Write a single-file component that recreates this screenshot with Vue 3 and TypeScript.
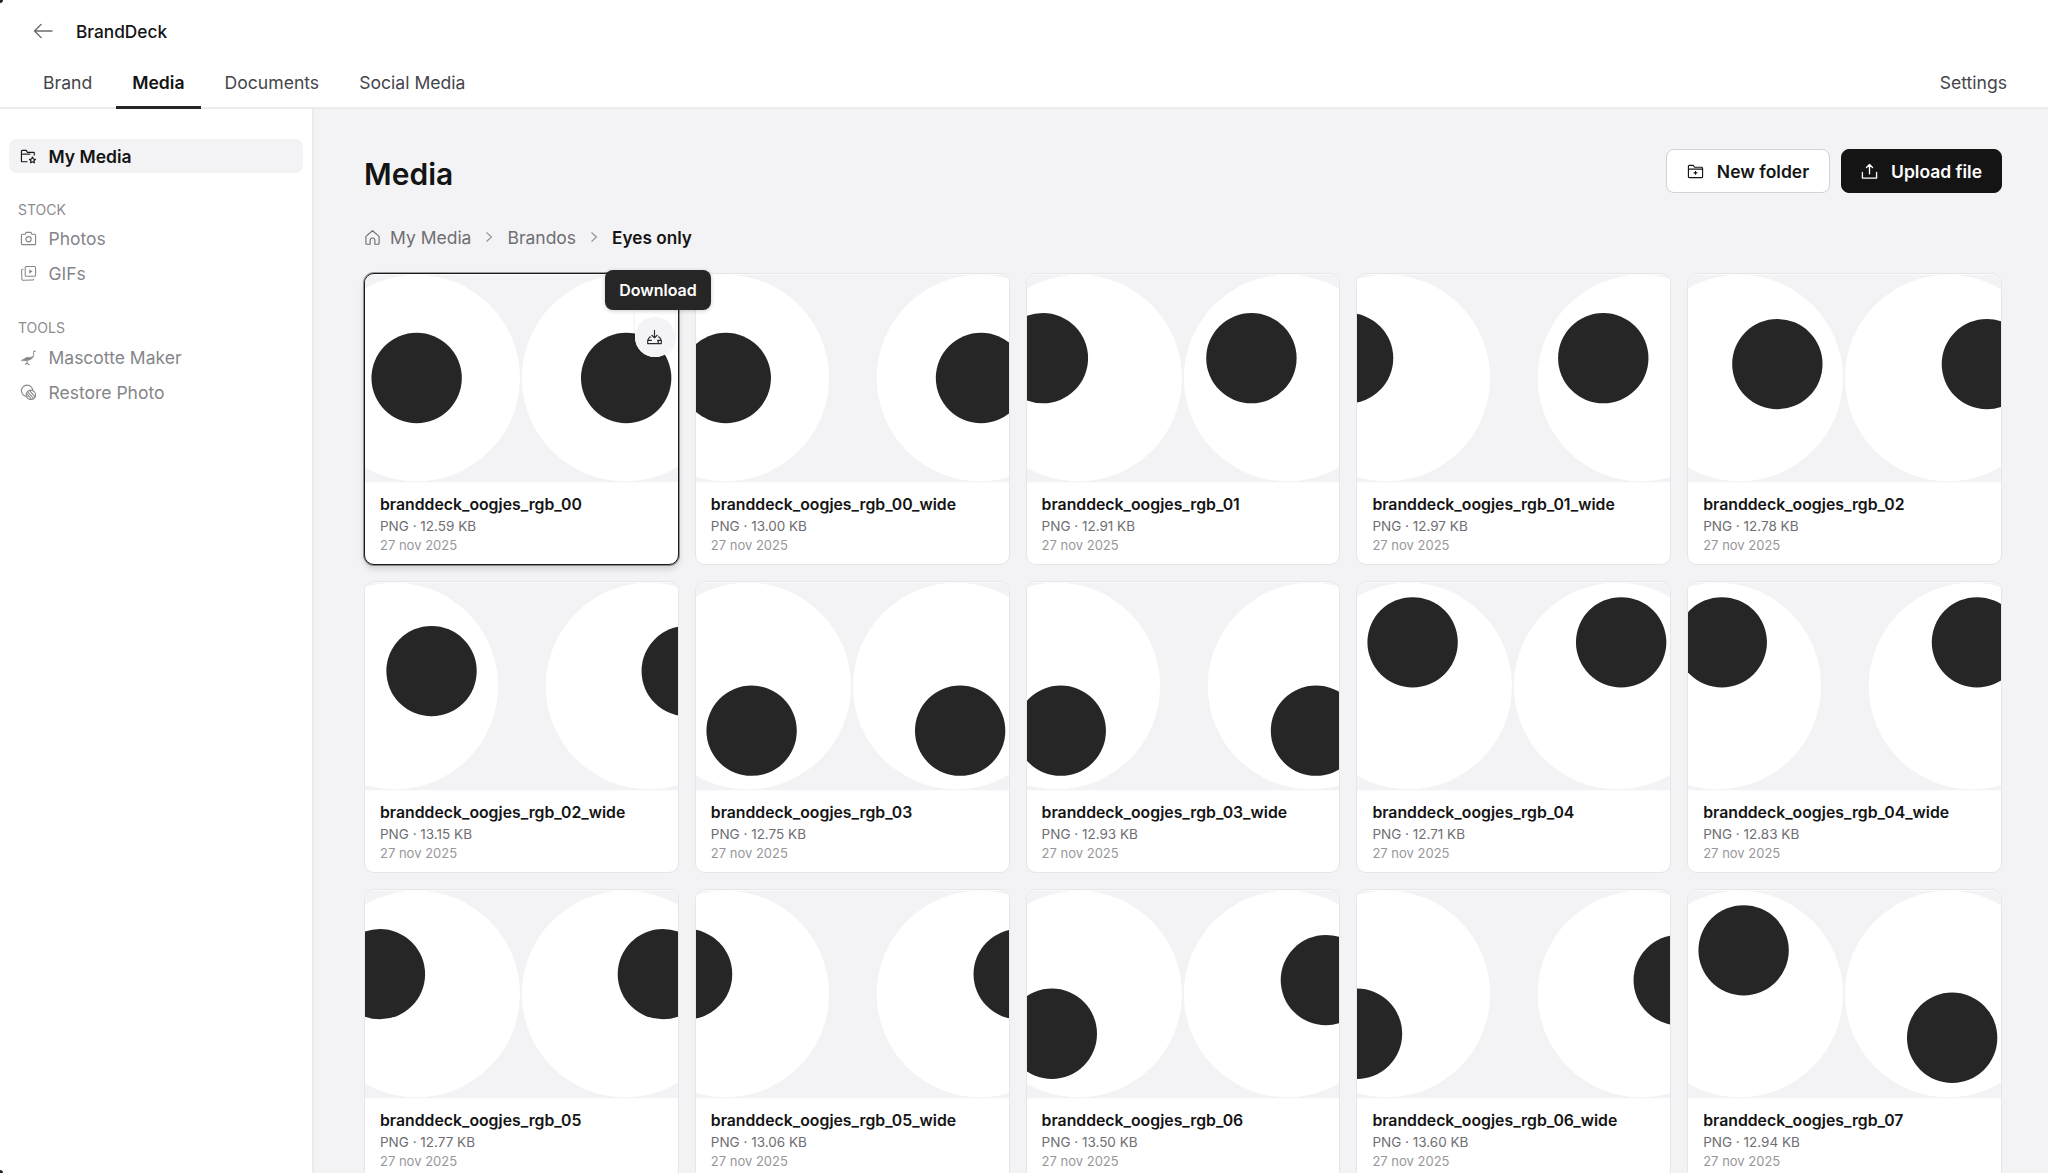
<template>
	<div class="app">
		<span class="corner corner-top"></span>
		<span class="corner corner-bottom"></span>
		<header class="topbar">
			<div class="brand-row">
				<svg class="back" viewBox="0 0 20 16" fill="none" stroke="#6b6b70" stroke-width="1.4" stroke-linecap="round" stroke-linejoin="round">
					<path d="M19 8H1.5M8 1.5 1.5 8 8 14.5" />
				</svg>
				<span class="brand-name">BrandDeck</span>
			</div>
			<nav class="tabs">
				<a v-for="t in tabs" :key="t" class="tab" :class="{ active: t === 'Media' }">{{ t }}</a>
				<a class="tab settings">Settings</a>
			</nav>
		</header>

		<div class="body">
			<aside class="sidebar">
				<div class="side-item current">
					<svg class="side-icon" viewBox="0 0 18 18" fill="none" stroke="currentColor" stroke-width="1.2" stroke-linejoin="round">
						<path d="M8 14.5H2.2a.7.7 0 0 1-.7-.7V3.2a.7.7 0 0 1 .7-.7h4.3L8 4.6h6.4a.7.7 0 0 1 .7.7V8" />
						<path d="M1.5 6.5H11" />
						<path d="m13.2 9.6 1 2.1 2.2.3-1.6 1.5.4 2.2-2-1.1-2 1.1.4-2.2-1.6-1.5 2.2-.3z" />
					</svg>
					<span>My Media</span>
				</div>

				<div class="side-label first">STOCK</div>
				<div class="side-item">
					<svg class="side-icon" viewBox="0 0 18 18" fill="none" stroke="currentColor" stroke-width="1.2" stroke-linejoin="round">
						<path d="M2.5 4.5h3l1-2h5l1 2h3a1 1 0 0 1 1 1v9a1 1 0 0 1-1 1h-13a1 1 0 0 1-1-1v-9a1 1 0 0 1 1-1z" />
						<circle cx="9" cy="9.8" r="2.8" />
					</svg>
					<span>Photos</span>
				</div>
				<div class="side-item">
					<svg class="side-icon" viewBox="0 0 18 18" fill="none" stroke="currentColor" stroke-width="1.1" stroke-linejoin="round">
						<rect x="5.5" y="1.5" width="11" height="10.5" rx="1.2" />
						<path d="M9.8 4.6v4.4l3.4-2.2z" fill="currentColor" stroke="none" />
						<path d="M3.6 4.5H3a1.3 1.3 0 0 0-1.3 1.4l.3 9.2a1.2 1.2 0 0 0 1.3 1.1l10-.3a1.2 1.2 0 0 0 1.2-1.2" />
					</svg>
					<span>GIFs</span>
				</div>

				<div class="side-label">TOOLS</div>
				<div class="side-item">
					<svg class="side-icon" viewBox="0 0 18 18" fill="none" stroke="currentColor" stroke-width="1.1" stroke-linecap="round">
						<path d="M16.6 2.4c-.8-1-2.300-.7-2.300.6 0 1.300.7 2.300.1 3.600-.7 1.500-2.300 2.300-4.300 2.300-2.200-.3-3.900.2-5.400 1.300L1 12.300c2.500.1 5 .2 6.800-.2 2.800-.5 5.200-1.600 6.200-3.600.8-1.500.1-2.900-.1-4.200" fill="currentColor" stroke-width=".5" />
						<path d="M7.500 12.300v2.800l-1.800 1.100M7.500 15.100l2 1.400" />
					</svg>
					<span>Mascotte Maker</span>
				</div>
				<div class="side-item">
					<svg class="side-icon" viewBox="0 0 18 18" fill="none" stroke="currentColor" stroke-width="1.1" stroke-linecap="round">
						<path d="M7.500 13.200A6 6 0 1 1 13.500 7" />
						<circle cx="11.500" cy="11.500" r="5" />
						<path d="m7.500 10.500 4 5M8.600 8.700l6 7M10.600 7.500l5.400 6.200" />
					</svg>
					<span>Restore Photo</span>
				</div>
			</aside>

			<main class="main">
				<div class="title-row">
					<h1 class="title">Media</h1>
					<div class="actions">
						<button class="btn btn-light">
							<svg class="btn-icon" viewBox="0 0 18 18" fill="none" stroke="currentColor" stroke-width="1.2" stroke-linejoin="round">
								<path d="M1.500 14.500v-11a1 1 0 0 1 1-1h4l1.500 2h7.500a1 1 0 0 1 1 1v9a1 1 0 0 1-1 1h-13a1 1 0 0 1-1-1z" />
								<path d="M1.500 6.500h15M9 8.500v4M7 10.500h4" />
							</svg>
							New folder
						</button>
						<button class="btn btn-dark">
							<svg class="btn-icon" viewBox="0 0 18 18" fill="none" stroke="currentColor" stroke-width="1.400" stroke-linecap="round" stroke-linejoin="round">
								<path d="M9 11.500V1.800M5.800 4.800 9 1.600l3.200 3.200M1.500 10v6h15v-6" />
							</svg>
							Upload file
						</button>
					</div>
				</div>

				<div class="crumbs">
					<svg class="home" viewBox="0 0 18 18" fill="none" stroke="currentColor" stroke-width="1.200" stroke-linejoin="round">
						<path d="M2 7.800 9 1.800l7 6v7.400a1 1 0 0 1-1 1h-3.500v-4.200a2.500 2.500 0 0 0-5 0v4.200H3a1 1 0 0 1-1-1z" />
					</svg>
					<span>My Media</span>
					<svg class="chev" viewBox="0 0 8 12" fill="none" stroke="currentColor" stroke-width="1.100"><path d="m1.500 1.500 5 4.500-5 4.500" /></svg>
					<span>Brandos</span>
					<svg class="chev" viewBox="0 0 8 12" fill="none" stroke="currentColor" stroke-width="1.100"><path d="m1.500 1.500 5 4.500-5 4.500" /></svg>
					<span class="crumb-now">Eyes only</span>
				</div>

				<div class="grid">
					<article v-for="(f, i) in files" :key="f.name" class="card" :class="{ selected: i === 0 }">
						<svg class="thumb" viewBox="0 0 315 209">
							<rect width="315" height="209" fill="#f3f3f5" />
							<circle :cx="f.wide ? 30 : 52" cy="104" r="104" fill="#fff" />
							<circle :cx="f.wide ? 286 : 262" cy="104" r="104" fill="#fff" />
							<circle :cx="f.eyes[0]" :cy="f.eyes[1] - 1" r="45.500" fill="#262626" />
							<circle :cx="f.eyes[2] + 1" :cy="f.eyes[3] - 1" r="45.500" fill="#262626" />
						</svg>
						<div class="info">
							<div class="file-name">{{ f.name }}</div>
							<div class="file-meta">PNG · {{ f.size }} KB</div>
							<div class="file-date">27 nov 2025</div>
						</div>
						<template v-if="i === 0">
							<div class="dl-pill">
								<div class="dl-btn">
									<svg viewBox="0 0 18 18" fill="none" stroke="#2a2a2a" stroke-width="1.200" stroke-linecap="round" stroke-linejoin="round">
										<path d="M9 1.500v7.500M6.200 6.600 9 9.300l2.800-2.700" />
										<path d="M5 8.500H3.800L1.800 12v3.500h14.400V12l-2-3.500H13M1.800 12h4M12.200 12h4" />
										<circle cx="13" cy="13.800" r=".4" />
									</svg>
								</div>
							</div>
							<div class="tooltip">Download</div>
						</template>
					</article>
				</div>
			</main>
		</div>
	</div>
</template>

<script setup lang="ts">
interface MediaFile {
	name: string
	size: string
	wide: boolean
	eyes: number[]
}

const tabs = ['Brand', 'Media', 'Documents', 'Social Media']

// pupil positions are read off the thumbnails: [left x, left y, right x, right y]
const rows: [string, string, number[]][] = [
	['00', '12.59', [52, 105, 262, 105]],
	['00_wide', '13.00', [30, 105, 286, 105]],
	['01', '12.91', [16, 85, 225, 85]],
	['01_wide', '12.97', [-9, 85, 247, 85]],
	['02', '12.78', [90, 91, 300, 91]],
	['02_wide', '13.15', [67, 90, 323, 90]],
	['03', '12.75', [56, 150, 265, 150]],
	['03_wide', '12.93', [34, 150, 290, 150]],
	['04', '12.71', [56, 61, 265, 61]],
	['04_wide', '12.83', [34, 61, 290, 61]],
	['05', '12.77', [15, 85, 299, 85]],
	['05_wide', '13.06', [-9, 85, 324, 85]],
	['06', '13.50', [25, 145, 300, 91]],
	['06_wide', '13.60', [0, 145, 323, 91]],
	['07', '12.94', [56, 61, 265, 149]],
]

const files: MediaFile[] = rows.map(([id, size, eyes]) => ({
	name: `branddeck_oogjes_rgb_${id}`,
	size,
	wide: id.endsWith('wide'),
	eyes,
}))
</script>

<style>
html,
body {
	margin: 0;
	height: 100%;
	overflow: hidden;
	background: #fff;
}
</style>

<style scoped>
.app {
	position: relative;
	height: 1173px;
	display: flex;
	flex-direction: column;
	overflow: hidden;
	font-family: Inter, "Noto Sans", sans-serif;
	color: #141414;
}

.corner {
	position: absolute;
	left: 0;
	width: 3px;
	height: 3px;
	background: #222;
	z-index: 5;
}

.corner-top {
	top: 0;
	border-bottom-right-radius: 3px;
}

.corner-bottom {
	bottom: 0;
	border-top-right-radius: 3px;
}

.topbar {
	flex-shrink: 0;
	height: 109px;
	box-sizing: border-box;
	background: #fff;
	border-bottom: 2px solid #ececee;
	display: flex;
	flex-direction: column;
}

.brand-row {
	display: flex;
	align-items: center;
	height: 62px;
	padding-left: 33px;
	gap: 23px;
}

.back {
	width: 20px;
	height: 16px;
}

.brand-name {
	font-size: 17.300px;
	font-weight: 500;
}

.tabs {
	display: flex;
	gap: 8px;
	padding: 0 27px;
	height: 45px;
}

.tab {
	padding: 0 16px;
	font-size: 17.600px;
	font-weight: 400;
	color: #45454a;
	line-height: 42px;
	height: 47px;
	box-sizing: border-box;
}

.tab.active {
	color: #141414;
	font-weight: 600;
	border-bottom: 3px solid #262626;
}

.settings {
	margin-left: auto;
	padding-right: 14px;
}

.body {
	flex: 1;
	display: flex;
	min-height: 0;
}

.sidebar {
	width: 314px;
	flex-shrink: 0;
	box-sizing: border-box;
	background: #fff;
	border-right: 2px solid #ececee;
	padding: 30px 9px 0;
}

.side-item {
	display: flex;
	align-items: center;
	gap: 11.500px;
	height: 35px;
	padding-left: 11px;
	font-size: 17.500px;
	font-weight: 400;
	color: #85858a;
}

.side-item.current {
	height: 34px;
	background: #f3f3f5;
	border-radius: 8px;
	color: #141414;
	font-weight: 600;
}

.side-icon {
	width: 17px;
	height: 17px;
}

.side-label {
	margin: 28px 0 3px 9px;
	font-size: 14px;
	color: #8c8c90;
	line-height: 18px;
}

.side-label.first {
	margin-top: 28px;
	margin-bottom: 2px;
}

.main {
	flex: 1;
	min-width: 0;
	background: #f3f3f5;
	padding: 40px 46px 0 50px;
}

.title-row {
	display: flex;
	justify-content: space-between;
	align-items: center;
	height: 44px;
}

.title {
	margin: 0;
	font-size: 30px;
	font-weight: 600;
	position: relative;
	top: 3px;
}

.actions {
	display: flex;
	gap: 11px;
}

.btn {
	display: flex;
	align-items: center;
	justify-content: center;
	gap: 13px;
	height: 44px;
	box-sizing: border-box;
	border-radius: 8px;
	font-family: inherit;
	font-size: 17.500px;
	font-weight: 600;
}

.btn-light {
	width: 164px;
	background: #fff;
	border: 1px solid #d2d2d6;
	color: #141414;
}

.btn-dark {
	width: 161px;
	background: #141414;
	border: 1px solid #141414;
	color: #fff;
}

.btn-icon {
	width: 17px;
	height: 17px;
}

.crumbs {
	display: flex;
	align-items: center;
	height: 34px;
	margin-top: 27px;
	font-size: 17.500px;
	font-weight: 400;
	color: #6e6e73;
}

.home {
	width: 17px;
	height: 17px;
	margin-right: 9px;
}

.chev {
	width: 8px;
	height: 12px;
	margin: 0 14px;
	color: #909095;
}

.crumb-now {
	color: #141414;
	font-weight: 600;
	font-size: 17.200px;
}

.grid {
	display: grid;
	grid-template-columns: repeat(5, 1fr);
	column-gap: 16px;
	row-gap: 16px;
	margin-top: 19px;
}

.card {
	position: relative;
	height: 292px;
	box-sizing: border-box;
	background: #fff;
	border: 1px solid #e6e6e9;
	border-radius: 10px;
}

.card.selected {
	border-color: #1a1a1a;
	box-shadow: 0 0 0 1px rgba(26, 26, 26, 0.4), 0 4px 6px rgba(0, 0, 0, 0.14);
	z-index: 2;
}

.thumb {
	display: block;
	width: 100%;
	height: 209px;
	border-radius: 9px 9px 0 0;
}

.info {
	padding: 11px 15px 0;
}

.file-name {
	font-size: 15.800px;
	font-weight: 600;
	line-height: 22px;
}

.file-meta {
	font-size: 13.500px;
	color: #6e6e73;
	line-height: 20px;
}

.file-date {
	font-size: 13px;
	color: #97979b;
	line-height: 18px;
}

.dl-pill {
	position: absolute;
	top: 19px;
	right: 3px;
	width: 40px;
	height: 64px;
	border-radius: 20px;
	background: #fff;
	box-shadow: 0 0 3px rgba(0, 0, 0, 0.12);
	display: flex;
	align-items: flex-end;
}

.dl-btn {
	width: 40px;
	height: 40px;
	border-radius: 50%;
	background: #f4f4f6;
	display: flex;
	align-items: center;
	justify-content: center;
}

.dl-btn svg {
	width: 17px;
	height: 17px;
}

.tooltip {
	position: absolute;
	top: -4px;
	left: 240px;
	width: 106px;
	height: 40px;
	border-radius: 8px;
	background: #262626;
	color: #fff;
	font-size: 16px;
	font-weight: 600;
	line-height: 40px;
	text-align: center;
	box-shadow: 0 1px 4px rgba(0, 0, 0, 0.2);
}
</style>
